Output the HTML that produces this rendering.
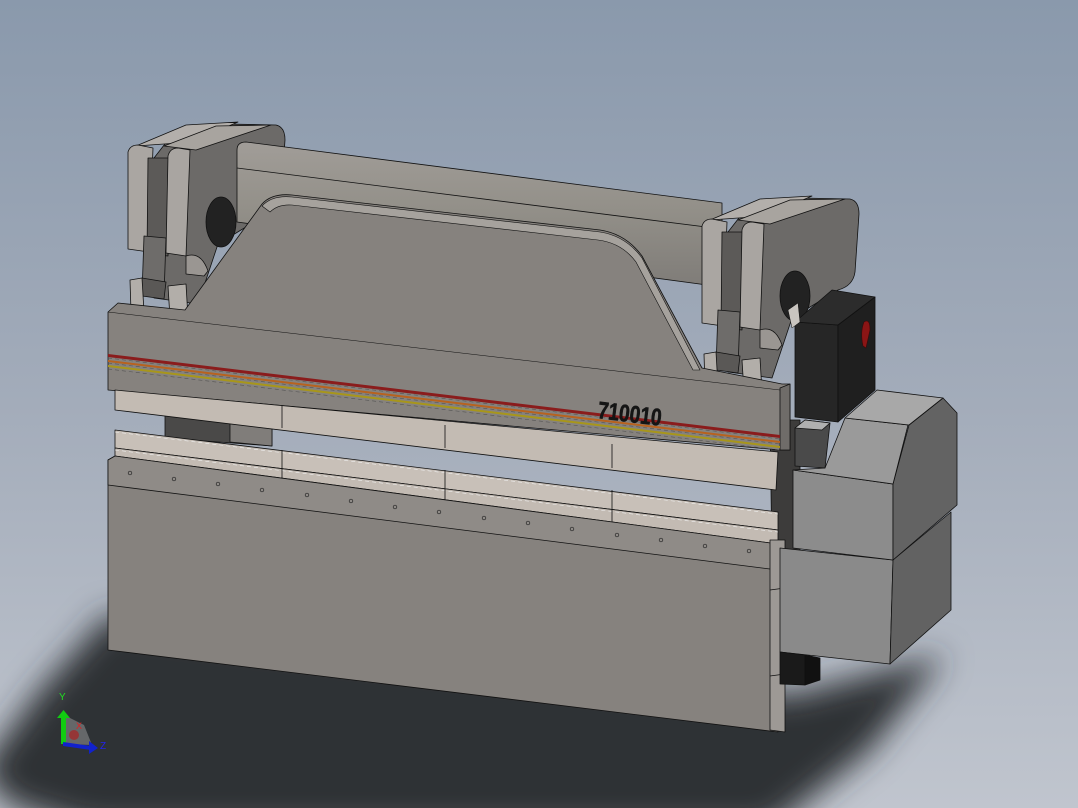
<!DOCTYPE html>
<html><head><meta charset="utf-8"><style>
html,body{margin:0;padding:0;width:1078px;height:808px;overflow:hidden}
svg{display:block}
</style></head><body>
<svg width="1078" height="808" viewBox="0 0 1078 808" xmlns="http://www.w3.org/2000/svg">
<defs>
<linearGradient id="bg" x1="0" y1="0" x2="0" y2="1">
<stop offset="0" stop-color="#8a99ac"/><stop offset="0.5" stop-color="#a3acba"/><stop offset="1" stop-color="#c0c5ce"/>
</linearGradient>
<filter id="blur" x="-20%" y="-30%" width="140%" height="160%"><feGaussianBlur stdDeviation="16"/></filter>
<linearGradient id="beamg" x1="0" y1="0" x2="0" y2="1">
<stop offset="0" stop-color="#a19d98"/><stop offset="0.45" stop-color="#939089"/><stop offset="1" stop-color="#7f7c78"/>
</linearGradient>
<g id="frame" stroke="#111" stroke-width="0.8" stroke-linejoin="round">
<path d="M742,214 L800,198 L850,199 Q859,201 859,214 L855,272 Q853,286 838,290 L792,318 L772,378 L728,372 L728,232 Z" fill="#6c6a68"/>
<path d="M710,220 L760,199 L812,196 L766,216 Z" fill="#b3afab"/>
<path d="M738,220 L790,200 L845,199 L770,224 Z" fill="#a8a49f"/>
<path d="M702,226 Q704,219 712,219 L727,222 L723,326 L702,323 Z" fill="#aaa6a2"/>
<path d="M722,232 L745,232 L742,330 L721,328 Z" fill="#5c5a58"/>
<path d="M742,230 Q744,222 752,222 L764,224 L760,330 L740,327 Z" fill="#a9a5a1"/>
<ellipse cx="795" cy="296" rx="15" ry="25" fill="#222"/>
<path d="M760,330 Q775,325 782,345 L778,350 L760,348 Z" fill="#9a9692"/>
<path d="M718,310 L740,312 L738,370 L716,368 Z" fill="#6e6c6a"/>
<path d="M716,352 L740,356 L738,373 L716,370 Z" fill="#5a5856"/>
<path d="M704,354 L716,352 L718,386 L705,386 Z" fill="#b2aea9"/>
<path d="M742,360 L760,358 L762,392 L744,392 Z" fill="#b2aea9"/>
</g>
</defs>
<rect width="1078" height="808" fill="url(#bg)"/>
<path d="M108,615 L790,695 L945,655 L870,750 L770,830 L90,830 L10,805 L-20,770 L40,690 Z" fill="#2f3034" filter="url(#blur)"/>

<g stroke="#111" stroke-width="0.8" stroke-linejoin="round">
<use href="#frame" transform="translate(-574,-74)"/>
<path d="M237,150 Q237,142 246,142 L722,203 L722,287 L237,222 Z" fill="url(#beamg)"/>
<path d="M237,168 L722,229" fill="none"/>
<use href="#frame"/>

<path d="M165,410 L272,418 L272,446 L165,438 Z" fill="#4a4948"/>
<path d="M230,415 L272,418 L272,446 L230,442 Z" fill="#807d7a"/>
<path d="M770,420 L800,420 L800,560 L772,560 Z" fill="#3d3c3b"/>

<path d="M108,312 L118,303 L185,310 L262,204 Q272,193 292,195 L600,230 Q626,234 642,256 L702,368 L782,384 L790,384 L790,450 L780,450 L108,390 Z" fill="#86827e"/>
<path d="M262,206 Q272,195 292,197 L600,232 Q626,236 642,258 L700,370 L693,370 L636,262 Q622,243 598,240 L292,205 Q278,204 270,212 Z" fill="#a6a29d" stroke-width="0.6"/>
<path d="M780,388 L790,384 L790,450 L780,450 Z" fill="#6f6c69"/>
<path d="M108,312 L780,390" fill="none" stroke-width="0.5"/>
<g stroke="none">
<path d="M108,354 L780,435 L780,438 L108,357 Z" fill="#8a1c1c"/>
<path d="M108,360 L780,441 L780,443 L108,362 Z" fill="#b8621e"/>
<path d="M108,365 L780,446 L780,448 L108,367 Z" fill="#a8961a"/>
</g>
<path d="M108,358 L780,439 M108,363 L780,444 M108,369 L780,450" fill="none" stroke="#555" stroke-width="0.6" stroke-dasharray="4,3"/>
<text x="0" y="0" transform="translate(597,418) rotate(7) scale(0.8,1)" font-family="Liberation Sans, sans-serif" font-weight="bold" font-size="24" fill="#151515" stroke="#151515" stroke-width="0.6">710010</text>

<path d="M115,390 L778,452 L776,490 L115,410 Z" fill="#c3bbb3"/>
<path d="M282,406 L282,428 M445,425 L445,448 M612,444 L612,468" fill="none"/>

<path d="M115,430 L778,512 L778,530 L115,448 Z" fill="#c8c0b8"/>
<path d="M115,448 L778,530 L778,546 L115,464 Z" fill="#c3bbb3"/>
<path d="M115,432 L778,514 M115,450 L778,532" fill="none" stroke="#eee" stroke-width="0.6" stroke-dasharray="4,3"/>
<path d="M282,450 L282,490 M445,470 L445,508 M612,490 L612,525" fill="none"/>

<path d="M108,460 L115,456 L778,544 L778,732 L108,650 Z" fill="#86827e"/>
<path d="M108,460 L115,456 L778,544 L778,570 L108,485 Z" fill="#8f8b87"/>
<path d="M770,540 L785,540 L785,732 L770,730 Z" fill="#9d9995"/>
<path d="M770,590 L785,588 M770,676 L785,674" fill="none"/>

<path d="M780,548 L893,560 L890,664 L780,652 Z" fill="#8a8a8a"/>
<path d="M893,560 L951,512 L951,610 L890,664 Z" fill="#626262"/>
<path d="M793,470 L893,484 L893,560 L793,548 Z" fill="#8c8c8c"/>
<path d="M893,484 L909,425 L943,398 L957,413 L957,505 L893,560 Z" fill="#636363"/>
<path d="M825,468 L845,418 L908,425 L893,484 L793,470 Z" fill="#9a9a9a"/>
<path d="M845,418 L877,390 L943,398 L909,425 Z" fill="#a8a8a8"/>
<path d="M795,428 L805,420 L830,423 L825,468 L795,466 Z" fill="#4a4a4a"/>
<path d="M795,428 L805,420 L830,423 L822,430 Z" fill="#b0b0b0"/>
<path d="M780,652 L805,655 L805,685 L780,684 Z" fill="#1a1a1a"/>
<path d="M805,655 L820,658 L820,680 L805,685 Z" fill="#111"/>
<path d="M795,322 L838,325 L838,422 L795,417 Z" fill="#262626"/>
<path d="M838,325 L875,297 L875,390 L838,422 Z" fill="#1f1f1f"/>
<path d="M795,322 L832,290 L875,297 L838,325 Z" fill="#2c2c2c"/>
<path d="M788,310 L798,303 L800,322 L792,328 Z" fill="#c9c5c0" stroke-width="0.5"/>
</g>
<g fill="none" stroke="#222" stroke-width="0.7">
<circle cx="130" cy="473" r="1.8"/><circle cx="174" cy="479" r="1.8"/><circle cx="218" cy="484" r="1.8"/><circle cx="262" cy="490" r="1.8"/><circle cx="307" cy="495" r="1.8"/><circle cx="351" cy="501" r="1.8"/><circle cx="395" cy="507" r="1.8"/><circle cx="439" cy="512" r="1.8"/><circle cx="484" cy="518" r="1.8"/><circle cx="528" cy="523" r="1.8"/><circle cx="572" cy="529" r="1.8"/><circle cx="617" cy="535" r="1.8"/><circle cx="661" cy="540" r="1.8"/><circle cx="705" cy="546" r="1.8"/><circle cx="749" cy="551" r="1.8"/>
</g>
<path d="M864,322 Q870,318 870,330 L866,348 L863,346 Q860,332 864,322 Z" fill="#8b1515" stroke="#3a0a0a" stroke-width="0.6"/>

<g>
<path d="M66,716 L84,725 L92,745 L64,744 Z" fill="#8a8a8c" opacity="0.6"/>
<circle cx="74" cy="735" r="5" fill="#a22" opacity="0.7"/>
<rect x="61" y="716" width="5" height="28" fill="#1c1"/>
<path d="M57,718 L63.5,710 L70,718 Z" fill="#1c1"/>
<path d="M63,742 L91,746 L91,750 L63,746 Z" fill="#12c"/>
<path d="M89,741 L98,748 L89,754 Z" fill="#12c"/>
<text x="59" y="700" font-family="Liberation Sans, sans-serif" font-size="10" fill="#2d2">Y</text>
<text x="76" y="729" font-family="Liberation Sans, sans-serif" font-size="9" fill="#d22">X</text>
<text x="100" y="749" font-family="Liberation Sans, sans-serif" font-size="10" fill="#22e">Z</text>
</g>
</svg>
</body></html>
